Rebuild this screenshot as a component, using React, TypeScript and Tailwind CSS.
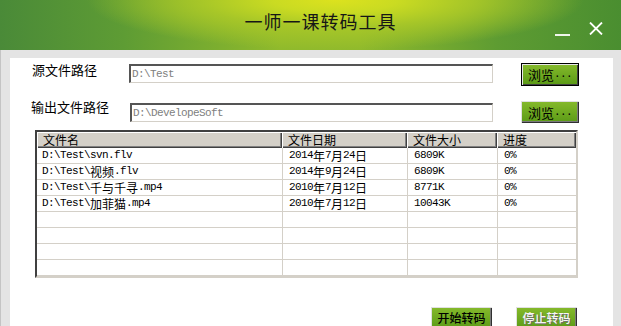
import React from "react";

const MONO = "inline-block leading-[13px] font-['Liberation_Mono',monospace] text-[11px] tracking-[-0.6px]";
const CJK = "inline-block leading-[13px] font-['Noto_Sans_CJK_SC',sans-serif] text-[12px]";

function Mixed({ text, mono = MONO, cjk = CJK }: { text: string; mono?: string; cjk?: string }) {
  const parts = text.match(/[\x00-\x7F]+|[^\x00-\x7F]+/g) || [];
  return (
    <>
      {parts.map((p, i) =>
        /^[\x00-\x7F]/.test(p) ? (
          <span key={i} className={mono}>
            {p}
          </span>
        ) : (
          <span key={i} className={cjk}>
            {p}
          </span>
        )
      )}
    </>
  );
}

const rows: string[][] = [
  ["D:\\Test\\svn.flv", "2014年7月24日", "6809K", "0%"],
  ["D:\\Test\\视频.flv", "2014年9月24日", "6809K", "0%"],
  ["D:\\Test\\千与千寻.mp4", "2010年7月12日", "8771K", "0%"],
  ["D:\\Test\\加菲猫.mp4", "2010年7月12日", "10043K", "0%"],
  ["", "", "", ""],
  ["", "", "", ""],
  ["", "", "", ""],
  ["", "", "", ""],
];

const headers = ["文件名", "文件日期", "文件大小", "进度"];

function GreenButton({
  children,
  focused,
  disabled,
  h,
}: {
  children: React.ReactNode;
  focused?: boolean;
  disabled?: boolean;
  h: string;
}) {
  return (
    <div
      className={
        "w-[58px] flex items-center justify-center bg-[linear-gradient(#86ba2c,#5a9a16)] " +
        h +
        " " +
        (focused
          ? "border border-black shadow-[inset_1px_1px_0_#e8e8e8,inset_-1px_-1px_0_#404040]"
          : "shadow-[inset_1px_1px_0_#e0e0e0,inset_-1px_-1px_0_#303030,inset_-2px_-2px_0_#7a7a7a]") +
        (disabled ? " text-[#f6f6f6] [text-shadow:1px_1px_0_#6f6f6f]" : " text-black")
      }
    >
      {children}
    </div>
  );
}

export default function App() {
  return (
    <div className="w-[621px] h-[326px] overflow-hidden flex flex-col bg-[#e4e4e4]">
      {/* title bar */}
      <div className="relative h-[50px] shrink-0 flex items-center justify-center pl-[20px] pb-[8px] bg-[radial-gradient(ellipse_40%_100%_at_54%_0%,#dce21e_0%,#cadb22_25%,#a6c628_55%,transparent_100%),linear-gradient(90deg,#4a8a38_0%,#5e9c34_20%,#90ba2c_45%,#90ba2c_58%,#5e9c32_80%,#4a8e30_100%)]">
        <span className="font-['Noto_Sans_CJK_SC',sans-serif] text-[18px] leading-none text-[#161616] tracking-[1px]">
          一师一课转码工具
        </span>
        <div className="absolute right-[18px] top-[21px] flex items-center gap-[19px]">
          <div className="w-[15px] h-[2px] bg-white mt-[13px] opacity-90" />
          <svg width="14" height="13" viewBox="0 0 14 13">
            <path d="M1 0.5 L13 12.5 M13 0.5 L1 12.5" stroke="white" strokeWidth="1.8" />
          </svg>
        </div>
      </div>
      {/* body */}
      <div className="flex-1 flex pl-[9px] pr-[8px] pt-[8px] border-l border-[#c4c4c4]">
        <div className="flex-1 bg-white flex flex-col">
          {/* row 1 */}
          <div className="flex items-start mt-[5px]">
            <div className="pl-[22px] w-[119px] mt-[-2px] leading-[18px] font-['Noto_Sans_CJK_SC',sans-serif] text-[13px] text-black">
              源文件路径
            </div>
            <div className="mt-[1px] w-[364px] h-[19px] bg-white border-t-2 border-l-2 border-t-[#555] border-l-[#555] border-b border-r border-b-[#d4d0c8] border-r-[#d4d0c8] flex items-center pl-[1px] text-[#808080]">
              <Mixed text="D:\Test" />
            </div>
            <div className="ml-[28px]">
              <GreenButton focused h="h-[23px]">
                <Mixed text="浏览..." cjk="inline-block leading-[15px] font-['Noto_Sans_CJK_SC',sans-serif] text-[13px]" />
              </GreenButton>
            </div>
          </div>
          {/* row 2 */}
          <div className="flex items-start mt-[15px]">
            <div className="pl-[21px] w-[120px] mt-[-3px] leading-[18px] font-['Noto_Sans_CJK_SC',sans-serif] text-[13px] text-black">
              输出文件路径
            </div>
            <div className="mt-[2px] w-[363px] h-[19px] bg-white border-t-2 border-l-2 border-t-[#555] border-l-[#555] border-b border-r border-b-[#d4d0c8] border-r-[#d4d0c8] flex items-center pl-[1px] text-[#808080]">
              <Mixed text="D:\DevelopeSoft" />
            </div>
            <div className="ml-[28px]">
              <GreenButton h="h-[22px]">
                <Mixed text="浏览..." cjk="inline-block leading-[15px] font-['Noto_Sans_CJK_SC',sans-serif] text-[13px]" />
              </GreenButton>
            </div>
          </div>
          {/* table */}
          <div className="ml-[25px] mt-[7px] w-[543px] border-t-2 border-l-2 border-t-[#404040] border-l-[#404040] border-b-2 border-r-2 border-b-[#d4d0c8] border-r-[#d4d0c8] bg-white">
            <div className="grid grid-cols-[245px_125px_90px_79px] h-[16px] bg-[#d4d0c8]">
              {headers.map((h) => (
                <div
                  key={h}
                  className="pl-[6px] h-[16px] flex items-center font-['Noto_Sans_CJK_SC',sans-serif] text-[12px] leading-[14px] text-black shadow-[inset_1px_1px_0_#ffffff,inset_-1px_-1px_0_#404040,inset_-2px_-2px_0_#808080]"
                >
                  {h}
                </div>
              ))}
            </div>
            {rows.map((r, i) => (
              <div key={i} className="grid grid-cols-[245px_125px_90px_79px] h-[16px] border-b border-[#d4d0c8]">
                {r.map((c, j) => (
                  <div
                    key={j}
                    className={
                      "h-[15px] flex items-center text-black leading-[13px] " +
                      (j === 0 ? "pl-[5px]" : "pl-[6px] border-l border-[#d4d0c8]")
                    }
                  >
                    <Mixed text={c} />
                  </div>
                ))}
              </div>
            ))}
          </div>
          {/* bottom buttons */}
          <div className="flex justify-end gap-[24px] pr-[36px] mt-[29px]">
            <GreenButton h="h-[22px] w-[61px]">
              <span className="font-['Noto_Sans_CJK_SC',sans-serif] text-[12px] font-medium">开始转码</span>
            </GreenButton>
            <GreenButton disabled h="h-[22px] w-[61px]">
              <span className="font-['Noto_Sans_CJK_SC',sans-serif] text-[12px] font-medium">停止转码</span>
            </GreenButton>
          </div>
        </div>
      </div>
    </div>
  );
}
